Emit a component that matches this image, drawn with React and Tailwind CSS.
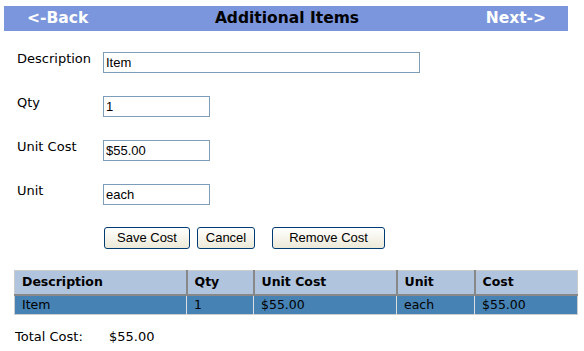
import React from 'react'

const rows = [
  { label: 'Description', value: 'Item', w: 'w-[317px]' },
  { label: 'Qty', value: '1', w: 'w-[107px]' },
  { label: 'Unit Cost', value: '$55.00', w: 'w-[107px]' },
  { label: 'Unit', value: 'each', w: 'w-[107px]' },
]

function Btn({ children, className = '' }) {
  return (
    <button className={`h-[22px] rounded-[3px] border border-[#003c74] bg-gradient-to-b from-white to-[#ece9d8] text-[13px] text-black font-['Liberation_Sans',sans-serif] ${className}`}>
      {children}
    </button>
  )
}

export default function App() {
  return (
    <div className="w-[584px] h-[351px] bg-white pt-[6px] font-['DejaVu_Sans',Verdana,sans-serif]">
      {/* Header */}
      <div className="mx-[4px] w-[564px] h-[25px] bg-[#7b96dd] flex items-center justify-between pl-[23px] pr-[22px]">
        <span className="text-white font-bold text-[15.5px]">&lt;-Back</span>
        <span className="text-black font-bold text-[15.5px]">Additional Items</span>
        <span className="text-white font-bold text-[15.5px]">Next-&gt;</span>
      </div>

      {/* Form */}
      <div className="mt-[21px] flex flex-col gap-[23px]">
        {rows.map((r) => (
          <div key={r.label} className="flex h-[21px]">
            <div className="w-[103px] pl-[17px] text-[13px] text-black -mt-[3px] font-['DejaVu_Sans',Tahoma,sans-serif]">{r.label}</div>
            <input
              readOnly
              value={r.value}
              className={`${r.w} h-[21px] border border-[#7f9db9] px-[2px] text-[13px] text-black font-['Liberation_Sans',sans-serif] outline-none`}
            />
          </div>
        ))}
      </div>

      {/* Buttons */}
      <div className="mt-[22px] flex pl-[104px]">
        <Btn className="w-[86px]">Save Cost</Btn>
        <Btn className="w-[58px] ml-[7px]">Cancel</Btn>
        <Btn className="w-[113px] ml-[17px]">Remove Cost</Btn>
      </div>

      {/* Table */}
      <table className="mt-[21px] ml-[14px] w-[564px] border-collapse border border-[#cccccc] text-[12.5px]">
        <thead>
          <tr className="bg-[#b0c4de] h-[24px] text-left">
            <th className="w-[172px] pl-[7px] border-r-2 border-[#888888] font-bold">Description</th>
            <th className="w-[67px] pl-[7px] border-r-2 border-[#888888] font-bold">Qty</th>
            <th className="w-[143px] pl-[7px] border-r-2 border-[#888888] font-bold">Unit Cost</th>
            <th className="w-[78px] pl-[7px] border-r-2 border-[#888888] font-bold">Unit</th>
            <th className="pl-[7px] font-bold">Cost</th>
          </tr>
        </thead>
        <tbody>
          <tr className="bg-[#4682b4] h-[20px] text-black border-t-2 border-[#888888]">
            <td className="pl-[7px] border-r border-[#dddddd]">Item</td>
            <td className="pl-[7px] border-r border-[#dddddd]">1</td>
            <td className="pl-[7px] border-r border-[#dddddd]">$55.00</td>
            <td className="pl-[7px] border-r border-[#dddddd]">each</td>
            <td className="pl-[7px]">$55.00</td>
          </tr>
        </tbody>
      </table>

      {/* Total */}
      <div className="mt-[12px] flex text-[13px] text-black">
        <span className="w-[109px] pl-[15px]">Total Cost:</span>
        <span>$55.00</span>
      </div>
    </div>
  )
}
